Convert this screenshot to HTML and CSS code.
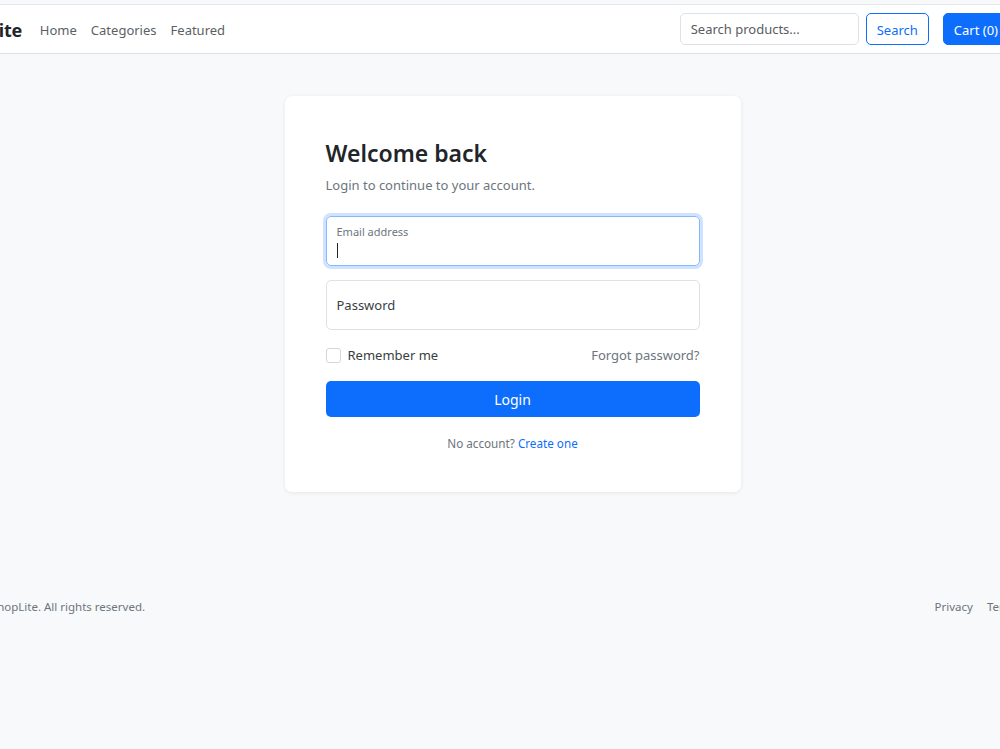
FILE: index.html
```html
<!DOCTYPE html>
<html lang="en">
<head>
  <meta charset="UTF-8">
  <meta name="viewport" content="width=device-width, initial-scale=1.0">
  <title>Login - ShopLite</title>
  <link rel="stylesheet" href="styles.css">
</head>
<body>
  <nav class="navbar">
    <div class="bar">
      <a class="brand" href="#">ShopLite</a>
      <ul class="nav-links">
        <li><a href="#">Home</a></li>
        <li><a href="#">Categories</a></li>
        <li><a href="#">Featured</a></li>
      </ul>
      <form class="search" onsubmit="return false">
        <input class="search-input" type="text" placeholder="Search products...">
        <button class="btn btn-outline" type="submit">Search</button>
      </form>
      <a class="btn btn-primary cart" href="#">Cart (0)</a>
    </div>
  </nav>

  <main class="main">
    <div class="card">
      <h1 class="title">Welcome back</h1>
      <p class="subtitle">Login to continue to your account.</p>

      <div class="field focused">
        <label class="float-label" for="email">Email address</label>
        <span class="caret"></span>
      </div>
      <div class="field">
        <label class="field-label" for="password">Password</label>
      </div>

      <div class="options">
        <label class="check">
          <span class="check-box"></span>
          Remember me
        </label>
        <a class="forgot" href="#">Forgot password?</a>
      </div>

      <button class="btn-login" type="button">Login</button>

      <p class="signup">No account? <a href="#">Create one</a></p>
    </div>
  </main>

  <footer class="footer">
    <div class="footer-bar">
      <span>&copy; 2024 ShopLite. All rights reserved.</span>
      <div class="footer-links">
        <a href="#">Privacy</a>
        <a href="#">Terms</a>
      </div>
    </div>
  </footer>
</body>
</html>
```

FILE: styles.css
```css
body {
  margin: 0;
  font-family: "Noto Sans", "Open Sans", sans-serif;
  font-size: 13px;
  color: #212529;
  background-color: #f8f9fa;
  overflow: hidden;
}
a {
  text-decoration: none;
}
.navbar {
  margin-top: 4px;
  background: #fff;
  border-top: 1px solid #e5e7ea;
  border-bottom: 1px solid #dee2e6;
}
.bar {
  display: flex;
  align-items: center;
  height: 48px;
  width: 1063px;
  margin-left: -54px;
}
.brand {
  padding-top: 2px;
  font-size: 18px;
  font-weight: 700;
  letter-spacing: -0.3px;
  color: #212529;
  margin-right: 11px;
}
.nav-links {
  display: flex;
  list-style: none;
  margin: 0;
  padding: 0;
}
.nav-links a {
  display: block;
  padding: 2px 7px 0;
  color: #5b5f64;
}
.search {
  display: flex;
  gap: 7px;
  margin-left: auto;
  margin-right: 14px;
}
.search-input {
  width: 179px;
  height: 32px;
  box-sizing: border-box;
  padding: 0 10px;
  border: 1px solid #dee2e6;
  border-radius: 5px;
  font: inherit;
}
.search-input::placeholder {
  color: #595c60;
}
.btn {
  display: inline-flex;
  align-items: center;
  height: 32px;
  box-sizing: border-box;
  padding: 1px 10px 0;
  border-radius: 5px;
  font: inherit;
  cursor: pointer;
}
.btn-outline {
  background: #fff;
  border: 1px solid #0d6efd;
  color: #0d6efd;
}
.btn-primary {
  background: #0d6efd;
  border: 1px solid #0d6efd;
  color: #fff;
}
.main {
  padding: 42px 0 106px 25px;
}
.card {
  width: 456px;
  box-sizing: border-box;
  margin: 0 auto;
  padding: 42px 41px 40px;
  background: #fff;
  border-radius: 7px;
  box-shadow: 0 1px 4px rgba(0, 0, 0, 0.08);
}
.title {
  margin: 1px 0 0;
  font-size: 23px;
  line-height: 29px;
  font-weight: 600;
}
.subtitle {
  margin: 7px 0 20px;
  line-height: 21px;
  color: #6c757d;
}
.field {
  height: 50px;
  box-sizing: border-box;
  border: 1px solid #dee2e6;
  border-radius: 5px;
  padding: 0 10px;
  display: flex;
  flex-direction: column;
  justify-content: center;
  margin-bottom: 14px;
}
.field.focused {
  border-color: #86b7fe;
  box-shadow: 0 0 0 3px rgba(13, 110, 253, 0.2);
  justify-content: flex-start;
  padding-top: 8px;
}
.float-label {
  font-size: 11px;
  line-height: 14px;
  color: #6c757d;
}
.caret {
  display: block;
  width: 1px;
  height: 15px;
  margin-top: 4px;
  background: #212529;
}
.field-label {
  color: #3a3e42;
}
.options {
  display: flex;
  justify-content: space-between;
  align-items: center;
  height: 24px;
  margin-top: -1px;
}
.check {
  display: flex;
  align-items: center;
  gap: 7px;
  color: #3a3e42;
}
.check-box {
  width: 13px;
  height: 13px;
  border: 1px solid #d3d7db;
  border-radius: 3px;
  background: #fff;
}
.forgot {
  color: #6c757d;
}
.btn-login {
  display: block;
  width: 100%;
  height: 36px;
  margin-top: 14px;
  border: none;
  border-radius: 5px;
  background: #0d6efd;
  color: #fff;
  font: inherit;
  font-size: 14px;
  cursor: pointer;
}
.signup {
  margin: 17px 0 0;
  text-align: center;
  font-size: 11.7px;
  line-height: 18px;
  color: #6c757d;
}
.signup a {
  color: #0d6efd;
}
.footer-bar {
  display: flex;
  justify-content: space-between;
  width: 1071px;
  margin-left: -51px;
  font-size: 11.5px;
  line-height: 18px;
  color: #6c757d;
}
.footer-links {
  display: flex;
  gap: 14px;
}
.footer-links a {
  color: #6c757d;
}
```
